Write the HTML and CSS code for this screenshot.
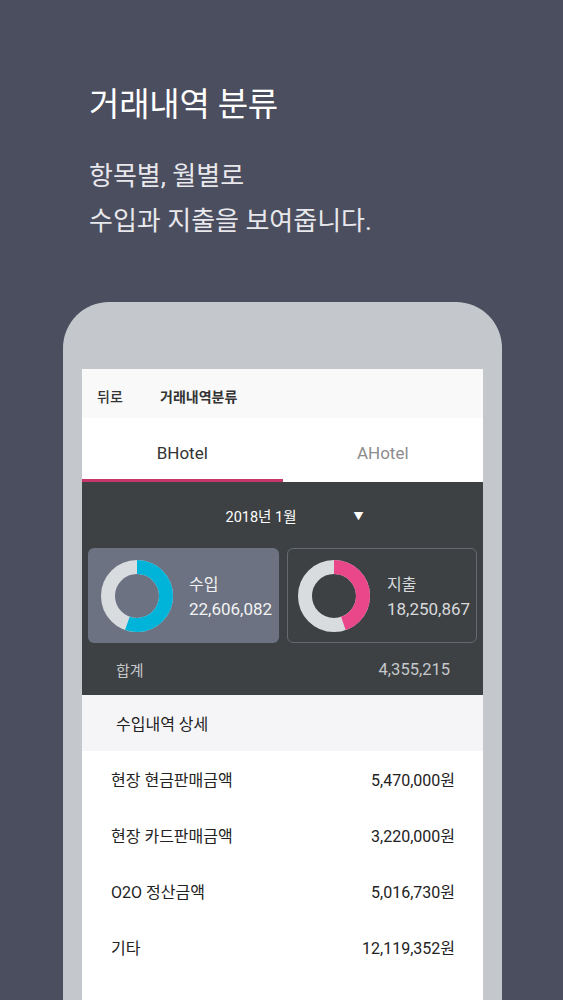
FILE: index.html
```html
<!DOCTYPE html>
<html lang="ko">
<head>
<meta charset="utf-8">
<title>거래내역 분류</title>
<link rel="stylesheet" href="styles.css">
</head>
<body>
<section class="intro">
  <h1 class="title">거래내역 분류</h1>
  <p class="subtitle">항목별, 월별로<br>수입과 지출을 보여줍니다.</p>
</section>
<div class="phone">
  <div class="screen">
    <div class="appbar">
      <span class="back">뒤로</span>
      <span class="appbar-title">거래내역분류</span>
    </div>
    <div class="tabs">
      <div class="tab active">BHotel</div>
      <div class="tab">AHotel</div>
    </div>
    <div class="panel">
      <div class="date-row">
        <span class="date">2018년 1월</span>
        <span class="caret">▼</span>
      </div>
      <div class="cards">
        <div class="card card-income">
          <svg class="donut" viewBox="0 0 72 72" width="72" height="72">
            <circle cx="36" cy="36" r="29" fill="none" stroke="#d9dcdf" stroke-width="14"/>
            <circle cx="36" cy="36" r="29" fill="none" stroke="#00b3d9" stroke-width="14" stroke-dasharray="100.8 182.2" transform="rotate(-90 36 36)"/>
          </svg>
          <div class="card-text">
            <div class="card-label">수입</div>
            <div class="card-value">22,606,082</div>
          </div>
        </div>
        <div class="card card-expense">
          <svg class="donut" viewBox="0 0 72 72" width="72" height="72">
            <circle cx="36" cy="36" r="29" fill="none" stroke="#d9dcdf" stroke-width="14"/>
            <circle cx="36" cy="36" r="29" fill="none" stroke="#e9478a" stroke-width="14" stroke-dasharray="81.4 182.2" transform="rotate(-90 36 36)"/>
          </svg>
          <div class="card-text">
            <div class="card-label">지출</div>
            <div class="card-value">18,250,867</div>
          </div>
        </div>
      </div>
      <div class="total-row">
        <span class="total-label">합계</span>
        <span class="total-value">4,355,215</span>
      </div>
    </div>
    <div class="section-head">수입내역 상세</div>
    <ul class="list">
      <li class="row"><span>현장 현금판매금액</span><span>5,470,000원</span></li>
      <li class="row"><span>현장 카드판매금액</span><span>3,220,000원</span></li>
      <li class="row"><span>O2O 정산금액</span><span>5,016,730원</span></li>
      <li class="row"><span>기타</span><span>12,119,352원</span></li>
    </ul>
  </div>
</div>
</body>
</html>
```

FILE: styles.css
```css
* { box-sizing: border-box; }
html, body {
  margin: 0;
  padding: 0;
  height: 1000px;
  overflow: hidden;
}
body {
  background: #4b4e5e;
  font-family: Roboto, "Noto Sans CJK KR", sans-serif;
}
.intro {
  padding: 83px 0 0 89px;
}
.title {
  margin: 0;
  font-size: 33px;
  font-weight: 400;
  line-height: 44px;
  color: #ffffff;
  letter-spacing: -0.2px;
}
.subtitle {
  margin: 27px 0 0;
  font-size: 26px;
  line-height: 45px;
  color: #e8e8ec;
  letter-spacing: 0;
}
.phone {
  margin: 58px 0 0 63px;
  width: 439px;
  height: 700px;
  background: #c4c8cc;
  border-radius: 46px 46px 0 0;
  padding: 67px 19px 0;
}
.screen {
  background: #ffffff;
  height: 100%;
}
.appbar {
  height: 49px;
  background: #f9f9f9;
  display: flex;
  align-items: center;
  padding: 4px 0 0 15px;
  font-size: 14px;
  font-weight: 700;
  color: #333;
}
.back {
  width: 63px;
  font-weight: 500;
}
.tabs {
  height: 64px;
  display: flex;
  background: #fff;
}
.tab {
  flex: 1;
  display: flex;
  align-items: center;
  justify-content: center;
  font-size: 17px;
  color: #8c8c8c;
  border-bottom: 3px solid transparent;
  padding-top: 9px;
}
.tab.active {
  color: #333;
  border-bottom-color: #c8376a;
}
.panel {
  background: #3d4144;
  height: 213px;
  display: flex;
  flex-direction: column;
}
.date-row {
  height: 66px;
  display: flex;
  align-items: center;
  justify-content: center;
  color: #ffffff;
  font-size: 14.5px;
  padding-left: 24px;
}
.caret {
  font-size: 10px;
  margin-left: 57px;
}
.cards {
  display: flex;
  gap: 8px;
  padding: 0 6px;
  height: 95px;
}
.card {
  flex: 1;
  border-radius: 6px;
  display: flex;
  align-items: center;
  gap: 16px;
  padding-left: 13px;
}
.card-income {
  background: #6c7281;
}
.card-expense {
  border: 1px solid #646a6f;
  padding-left: 10px;
  gap: 17px;
}
.donut {
  display: block;
  flex: none;
}
.card-text {
  color: #f2f2f4;
  padding-top: 2px;
}
.card-label {
  font-size: 16px;
  line-height: 24px;
}
.card-value {
  font-size: 17px;
  line-height: 24px;
}
.card-expense .card-text {
  color: #d8dadc;
}
.total-row {
  flex: 1;
  display: flex;
  align-items: center;
  justify-content: space-between;
  padding: 0 33px 0 34px;
  color: #c6c8ca;
}
.total-label {
  font-size: 15px;
}
.total-value {
  font-size: 16.5px;
}
.section-head {
  height: 56px;
  background: #f5f5f7;
  display: flex;
  align-items: center;
  padding-left: 34px;
  font-size: 16px;
  color: #222;
}
.list {
  list-style: none;
  margin: 0;
  padding: 0;
}
.row {
  height: 56px;
  display: flex;
  align-items: center;
  justify-content: space-between;
  padding: 0 28px 0 29px;
  font-size: 16px;
  color: #222;
}
```
